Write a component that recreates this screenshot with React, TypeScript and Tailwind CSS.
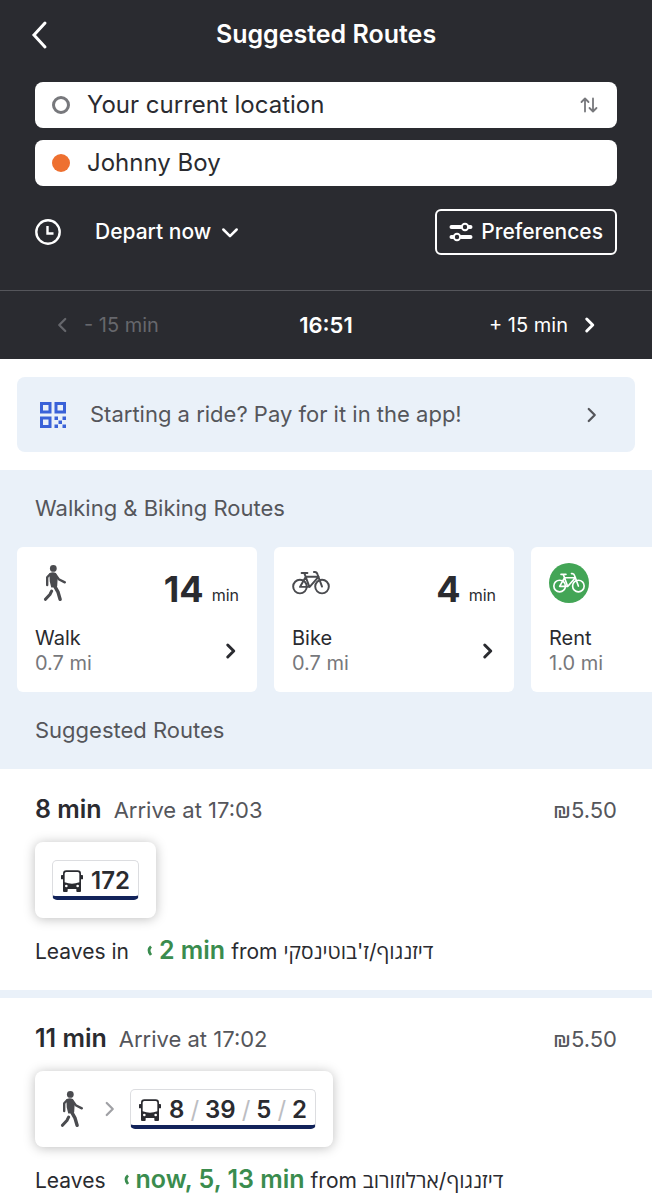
import { useState } from 'react'
import type { ReactNode } from 'react'

type IconProps = { className?: string }

function Chevron({ className, dir = 'right', weight = 3 }: IconProps & { dir?: 'left' | 'right' | 'down'; weight?: number }) {
  const d = { left: 'M15 4L7 12L15 20', right: 'M9 4L17 12L9 20', down: 'M4 9L12 17L20 9' }[dir]
  return (
    <svg viewBox="0 0 24 24" fill="none" stroke="currentColor" strokeWidth={weight} strokeLinecap="round" strokeLinejoin="round" className={className} aria-hidden="true">
      <path d={d} />
    </svg>
  )
}

function WalkIcon({ className }: IconProps) {
  return (
    <svg viewBox="0 0 66 106" fill="none" stroke="currentColor" strokeLinecap="round" strokeLinejoin="round" className={className} aria-hidden="true">
      <circle cx="28" cy="10" r="10" fill="currentColor" stroke="none" />
      <path d="M19 26Q27 22 34 26L38 44L37 62L24 64L20 48Z" fill="currentColor" strokeWidth="5" />
      <path d="M34 28L44 42L62 51" strokeWidth="7" />
      <path d="M19 27L10 36L10 59" strokeWidth="7" />
      <path d="M32 62L42 80L48 101" strokeWidth="10" />
      <path d="M23 77L18 87L5 101" strokeWidth="9" />
    </svg>
  )
}

function BikeIcon({ className }: IconProps) {
  return (
    <svg viewBox="0 0 116 74" fill="none" stroke="currentColor" strokeWidth="6" strokeLinecap="round" strokeLinejoin="round" className={className} aria-hidden="true">
      <circle cx="24" cy="48" r="21" />
      <circle cx="92" cy="48" r="21" />
      <path d="M29 6H47" />
      <path d="M38 8L53 49H24L42 18H81L54 49" />
      <path d="M92 48L78 10Q76 3 70 3H67" />
    </svg>
  )
}

function BusIcon({ className }: IconProps) {
  return (
    <svg viewBox="0 0 66 66" fill="currentColor" className={className} aria-hidden="true">
      <path fillRule="evenodd" d="M16 1H50Q60 1 60 11V57H6V11Q6 1 16 1ZM16 6Q11 6 11 11V37Q33 45 55 37V11Q55 6 50 6ZM16 44A4 4 0 1 0 16 52A4 4 0 1 0 16 44ZM50 44A4 4 0 1 0 50 52A4 4 0 1 0 50 44Z" />
      <rect x="0" y="15" width="7" height="13" rx="2" />
      <rect x="59" y="15" width="7" height="13" rx="2" />
      <rect x="6" y="54" width="14" height="12" rx="3" />
      <rect x="46" y="54" width="14" height="12" rx="3" />
    </svg>
  )
}

function QrIcon({ className }: IconProps) {
  return (
    <svg viewBox="0 0 26 26" fill="currentColor" className={className} aria-hidden="true">
      <path fillRule="evenodd" d="M0 0H11.5V11.5H0ZM3 3V8.5H8.5V3ZM14.5 0H26V11.5H14.5ZM17.5 3V8.5H23V3ZM0 14.5H11.5V26H0ZM3 17.5V23H8.5V17.5Z" />
      <path d="M14.5 14.5h3.5v3.5h-3.5zM22.5 14.5h3.5v3.5h-3.5zM18.5 18.5h3.5v3.5h-3.5zM14.5 22.5h3.5v3.5h-3.5zM22.5 22.5h3.5v3.5h-3.5z" />
    </svg>
  )
}

function SlidersIcon({ className }: IconProps) {
  return (
    <svg viewBox="0 0 23 20" fill="none" stroke="currentColor" className={className} aria-hidden="true">
      <path d="M2 5H11M20 5H21M2 15H3M12 15H21" strokeWidth="4" strokeLinecap="round" />
      <circle cx="15.5" cy="5" r="3.2" strokeWidth="2" />
      <circle cx="7.5" cy="15" r="3.2" strokeWidth="2" />
    </svg>
  )
}

function ClockIcon({ className }: IconProps) {
  return (
    <svg viewBox="0 0 26 26" fill="none" stroke="currentColor" strokeWidth="2.4" className={className} aria-hidden="true">
      <circle cx="13" cy="13" r="11.7" />
      <path d="M12.5 7V14.5H18.5" />
    </svg>
  )
}

function SwapIcon({ className }: IconProps) {
  return (
    <svg viewBox="0 0 18 16" fill="none" stroke="currentColor" strokeWidth="1.8" strokeLinecap="round" strokeLinejoin="round" className={className} aria-hidden="true">
      <path d="M5 14.5V2M1.5 5L5 1.5L8.5 5M13 1.5V14M9.5 11L13 14.5L16.5 11" />
    </svg>
  )
}

type Mode = { name: string; dist: string; mins?: number }

const modes: Mode[] = [
  { name: 'Walk', dist: '0.7 mi', mins: 14 },
  { name: 'Bike', dist: '0.7 mi', mins: 4 },
  { name: 'Rent', dist: '1.0 mi' },
]

const routes = [
  { total: '8 min', arrive: '17:03', price: '₪5.50', walk: false, lines: ['172'], lead: 'Leaves in', next: '2 min', stop: "דיזנגוף/ז'בוטינסקי" },
  { total: '11 min', arrive: '17:02', price: '₪5.50', walk: true, lines: ['8', '39', '5', '2'], lead: 'Leaves', next: 'now, 5, 13 min', stop: 'דיזנגוף/ארלוזורוב' },
]

function ModeIcon({ name }: { name: string }) {
  if (name === 'Walk') return <WalkIcon className="ml-2 h-9 w-6 text-[#4a4b4f]" />
  if (name === 'Bike') return <BikeIcon className="h-6 w-[38px] text-[#4a4b4f]" />
  return (
    <span className="grid size-10 place-items-center rounded-full bg-[#43a556] text-white">
      <BikeIcon className="h-[22px] w-8" />
    </span>
  )
}

function ModeCard({ name, dist, mins }: Mode) {
  return (
    <button className="flex h-[145px] w-60 shrink-0 flex-col justify-between rounded-md bg-white px-[18px] py-4 text-left">
      <span className="flex w-full items-start justify-between">
        <span className="flex h-10 items-center">
          <ModeIcon name={name} />
        </span>
        {mins && (
          <span className="flex h-[52px] items-center gap-2">
            <span className="text-4xl font-bold">{mins}</span>
            <span className="pt-3 text-base">min</span>
          </span>
        )}
      </span>
      <span className="flex w-full items-center justify-between">
        <span className="flex flex-col text-xl leading-[25px]">
          <span>{name}</span>
          <span className="text-[#77787c]">{dist}</span>
        </span>
        <Chevron className="size-[18px]" weight={4} />
      </span>
    </button>
  )
}

function LineBadge({ lines }: { lines: string[] }) {
  return (
    <span className="flex h-10 items-center gap-2 rounded-[5px] border border-b-4 border-[#dcdde0] border-b-[#12235a] px-2 pt-1 text-2xl font-semibold">
      <BusIcon className="size-[22px]" />
      <span className="flex items-center gap-1.5">
        {lines.map((l, i) => (
          <span key={l} className="flex items-center gap-1.5">
            {i > 0 && <span className="font-normal text-[#bcbdc2]">/</span>}
            {l}
          </span>
        ))}
      </span>
    </span>
  )
}

function Route({ total, arrive, price, walk, lines, lead, next, stop }: (typeof routes)[number]) {
  return (
    <li className="flex flex-col items-start border-b-8 border-[#eaf1f9] bg-white px-[35px] pt-6 pb-[22px]">
      <div className="flex w-full items-baseline gap-3">
        <h3 className="text-[25px] leading-8 font-semibold">{total}</h3>
        <span className="text-[22px] leading-8 text-[#55565b]">Arrive at {arrive}</span>
        <span className="ml-auto text-[22px] leading-8 text-[#55565b]">{price}</span>
      </div>
      <button className="mt-4 flex h-[76px] items-center gap-3 rounded-lg bg-white px-[17px] shadow-[0_1px_12px_rgba(0,0,0,0.26)]">
        {walk && (
          <>
            <WalkIcon className="mr-1 ml-2 h-9 w-6 text-[#4a4b4f]" />
            <Chevron className="size-[18px] text-[#a0a1a5]" />
          </>
        )}
        <LineBadge lines={lines} />
      </button>
      <p className="mt-4 flex items-baseline text-[21px] leading-8">
        <span className="mr-4">{lead}</span>
        <svg viewBox="0 0 8 12" fill="none" stroke="currentColor" strokeWidth="2.8" className="mr-1.5 h-3 w-2 self-center text-[#3a8c4e]" aria-hidden="true">
          <path d="M6 1.5Q2 5 6 10" />
        </svg>
        <strong className="mr-1.5 text-[25px] leading-8 font-semibold text-[#3a8c4e]">{next}</strong>
        <span>from {stop}</span>
      </p>
    </li>
  )
}

function Place({ id, label, value, onChange, marker, children }: {
  id: string; label: string; value: string; onChange: (v: string) => void; marker: string; children?: ReactNode
}) {
  return (
    <div className="flex h-[46px] items-center rounded-lg bg-white px-[17px] text-[#2a2b30]">
      <span className={marker} />
      <input id={id} aria-label={label} value={value} onChange={(e) => onChange(e.target.value)}
        className="ml-[17px] min-w-0 flex-1 bg-transparent text-2xl outline-none" />
      {children}
    </div>
  )
}

export default function App() {
  const [from, setFrom] = useState('Your current location')
  const [to, setTo] = useState('Johnny Boy')

  function swap() {
    setFrom(to)
    setTo(from)
  }

  return (
    <div className="flex h-screen flex-col bg-white font-[Inter,'Open_Sans','Liberation_Sans',sans-serif] text-[#2a2b30]">
      <header className="shrink-0 bg-[#2a2b30] text-white">
        <div className="grid h-[70px] grid-cols-[1fr_auto_1fr] items-center px-[30px]">
          <button aria-label="Back" className="w-fit">
            <svg viewBox="0 0 20 30" fill="none" stroke="currentColor" strokeWidth="3" strokeLinecap="round" className="h-[30px] w-5" aria-hidden="true">
              <path d="M15 3L4 15L15 27" />
            </svg>
          </button>
          <h1 className="text-[25px] font-semibold">Suggested Routes</h1>
        </div>

        <div className="flex flex-col gap-3 px-[35px] pt-3">
          <Place id="from" label="From" value={from} onChange={setFrom} marker="size-[18px] rounded-full border-[3px] border-[#77787c]">
            <button aria-label="Swap" onClick={swap} className="text-[#77787c]">
              <SwapIcon className="h-4 w-[22px]" />
            </button>
          </Place>
          <Place id="to" label="To" value={to} onChange={setTo} marker="size-[18px] rounded-full bg-[#ee7030]" />
        </div>

        <div className="flex items-center px-[35px] pt-[23px] pb-[35px]">
          <ClockIcon className="size-[26px]" />
          <label className="ml-[34px] flex items-center gap-2">
            <select aria-label="Departure time" className="appearance-none bg-transparent text-[21px] font-medium outline-none">
              <option>Depart now</option>
            </select>
            <Chevron dir="down" className="size-5" />
          </label>
          <button className="ml-auto flex h-[46px] items-center gap-2 rounded-md border-2 border-white px-3 text-[21px] font-medium">
            <SlidersIcon className="h-5 w-6" />
            Preferences
          </button>
        </div>

        {/* time stepper */}
        <div className="grid h-[69px] grid-cols-3 items-center border-t border-[#55565b] px-[54px] text-xl">
          <button disabled className="flex items-center gap-3 text-[#66676c]">
            <Chevron dir="left" className="size-[18px]" />- 15 min
          </button>
          <span className="text-center text-[22px] font-semibold">16:51</span>
          <button className="flex items-center justify-end gap-3">
            + 15 min<Chevron className="size-[18px]" weight={4} />
          </button>
        </div>
      </header>

      <main className="min-h-0 flex-1 overflow-y-auto [scrollbar-width:none]">
        <div className="px-[17px] py-[18px]">
          <button className="flex h-[75px] w-full items-center rounded-lg bg-[#eaf1f9] px-[23px] text-left text-[#55565b]">
            <QrIcon className="size-[26px] text-[#3a62d8]" />
            <span className="ml-6 flex-1 text-[22px]">Starting a ride? Pay for it in the app!</span>
            <Chevron className="mr-3 size-[18px]" />
          </button>
        </div>

        <section className="bg-[#eaf1f9]">
          <h2 className="px-[35px] pt-[23px] pb-6 text-[22px] leading-[30px] text-[#55565b]">Walking & Biking Routes</h2>
          <div className="flex gap-[17px] overflow-x-auto px-[17px] [scrollbar-width:none]">
            {modes.map((m) => <ModeCard key={m.name} {...m} />)}
          </div>
          <h2 className="px-[35px] pt-[23px] pb-6 text-[22px] leading-[30px] text-[#55565b]">Suggested Routes</h2>
        </section>

        <ul>
          {routes.map((r) => <Route key={r.total} {...r} />)}
        </ul>
      </main>
    </div>
  )
}
